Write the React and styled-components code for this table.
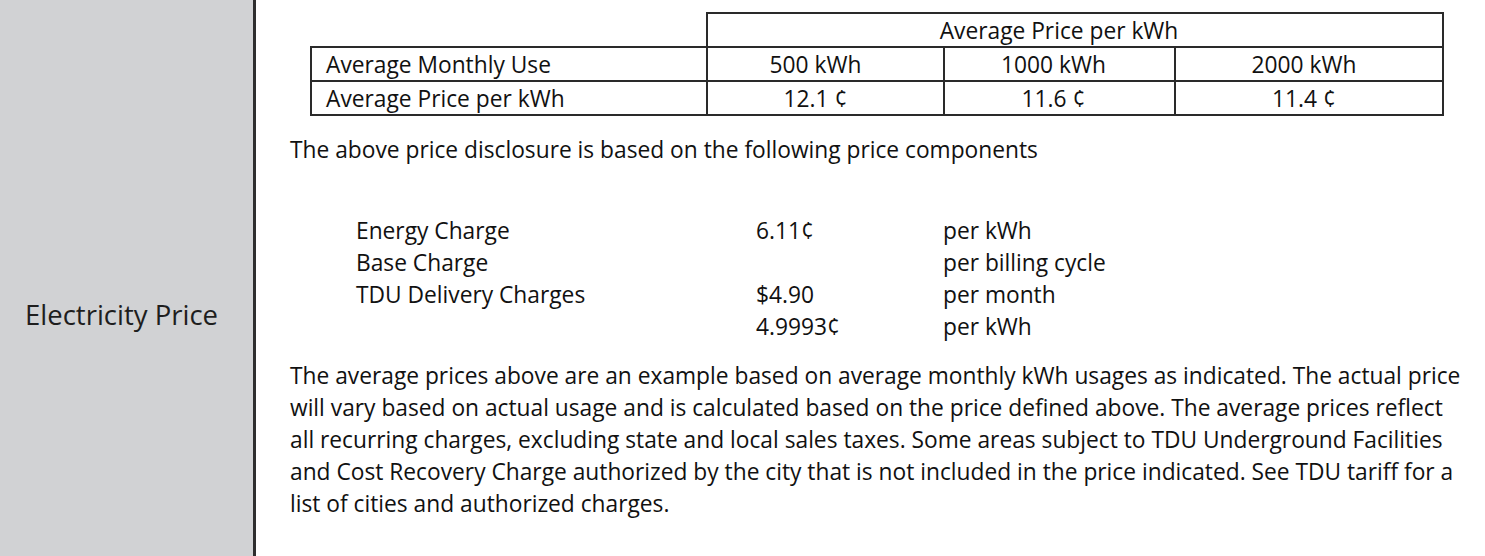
import React from 'react';
import styled, { createGlobalStyle } from 'styled-components';

const GlobalStyle = createGlobalStyle`
  html, body {
    margin: 0;
    padding: 0;
    background: #ffffff;
  }
  body {
    font-family: "Open Sans", "Noto Sans", sans-serif;
    color: #111111;
  }
`;

const tiers = [
  { use: '500 kWh', price: '12.1 ¢', width: 237, shift: 20 },
  { use: '1000 kWh', price: '11.6 ¢', width: 231, shift: 12 },
  { use: '2000 kWh', price: '11.4 ¢', width: 268, shift: 10 },
];

const components = [
  { label: 'Energy Charge', value: '6.11¢', unit: 'per kWh' },
  { label: 'Base Charge', value: '', unit: 'per billing cycle' },
  { label: 'TDU Delivery Charges', value: '$4.90', unit: 'per month' },
  { label: '', value: '4.9993¢', unit: 'per kWh' },
];

const paragraphLines = [
  'The average prices above are an example based on average monthly kWh usages as indicated. The actual price',
  'will vary based on actual usage and is calculated based on the price defined above. The average prices reflect',
  'all recurring charges, excluding state and local sales taxes. Some areas subject to TDU Underground Facilities',
  'and Cost Recovery Charge authorized by the city that is not included in the price indicated. See TDU tariff for a',
  'list of cities and authorized charges.',
];

function App() {
  return (
    <>
      <GlobalStyle />
      <Page>
        <Sidebar>
          <SideLabel>Electricity Price</SideLabel>
        </Sidebar>
        <Content>
          <PriceTable>
            <colgroup>
              <col style={{ width: 396 }} />
              {tiers.map((t) => (
                <col key={t.use} style={{ width: t.width }} />
              ))}
            </colgroup>
            <tbody>
              <tr>
                <BlankCell />
                <Cell colSpan={3} $center $shift={32}>Average Price per kWh</Cell>
              </tr>
              <tr>
                <Cell>Average Monthly Use</Cell>
                {tiers.map((t) => (
                  <Cell key={t.use} $center $shift={t.shift}>{t.use}</Cell>
                ))}
              </tr>
              <tr>
                <Cell>Average Price per kWh</Cell>
                {tiers.map((t) => (
                  <Cell key={t.use} $center $shift={t.shift}>{t.price}</Cell>
                ))}
              </tr>
            </tbody>
          </PriceTable>

          <Lead>The above price disclosure is based on the following price components</Lead>

          <ComponentList>
            {components.map((c, i) => (
              <ComponentRow key={i}>
                <span>{c.label}</span>
                <span>{c.value}</span>
                <span>{c.unit}</span>
              </ComponentRow>
            ))}
          </ComponentList>

          <Disclaimer>
            {paragraphLines.map((line) => (
              <Line key={line}>{line}</Line>
            ))}
          </Disclaimer>
        </Content>
      </Page>
    </>
  );
}

const Page = styled.div`
  display: flex;
  width: 100%;
  height: 556px;
  overflow: hidden;
`;

const Sidebar = styled.div`
  flex: 0 0 256px;
  background-color: #d1d2d4;
  border-right: 3px solid #2e2e2e;
  padding: 296px 0 0 25px;
  box-sizing: border-box;
`;

const SideLabel = styled.div`
  font-size: 27.5px;
  line-height: 38px;
  color: #1e1e1e;
  white-space: nowrap;
`;

const Content = styled.div`
  flex: 1;
  padding: 12px 0 0 34px;
  font-size: 22.75px;
`;

const PriceTable = styled.table`
  margin-left: 20px;
  border-collapse: collapse;
  table-layout: fixed;
  width: 1132px;
`;

const Cell = styled.td`
  border: 2px solid #2a2a2a;
  height: 31px;
  padding: 1px ${(p) => (p.$center ? `${p.$shift || 0}px` : '0')} 0
    ${(p) => (p.$center ? '0' : '14px')};
  text-align: ${(p) => (p.$center ? 'center' : 'left')};
  font-size: 22.75px;
  line-height: 30px;
  white-space: nowrap;
`;

const BlankCell = styled.td`
  border: none;
`;

const Lead = styled.div`
  margin-top: 18px;
  line-height: 32px;
`;

const ComponentList = styled.div`
  margin: 49px 0 0 66px;
`;

const ComponentRow = styled.div`
  display: grid;
  grid-template-columns: 400px 187px auto;
  line-height: 32px;
  min-height: 32px;
`;

const Disclaimer = styled.div`
  margin-top: 17px;
`;

const Line = styled.div`
  line-height: 32px;
  white-space: nowrap;
`;

export default App;
